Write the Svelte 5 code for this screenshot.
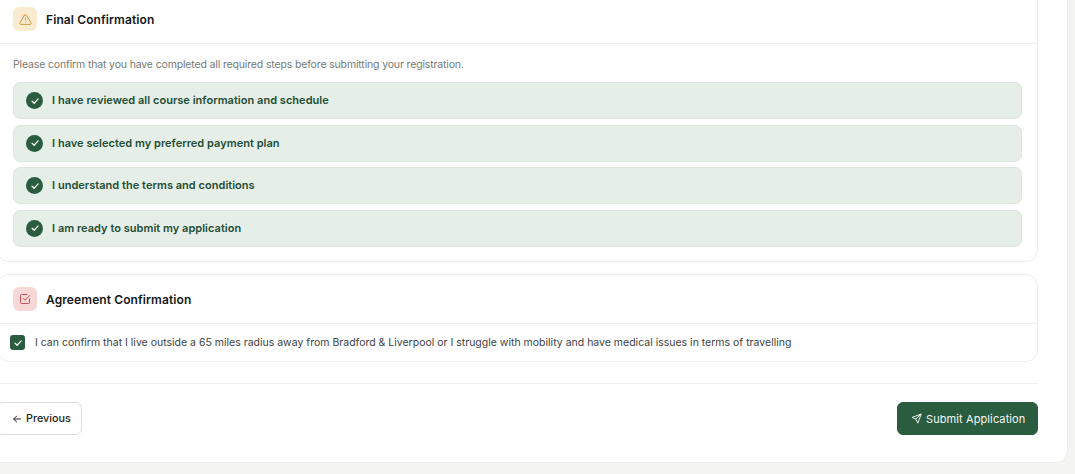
<script>
  let steps = [
    "I have reviewed all course information and schedule",
    "I have selected my preferred payment plan",
    "I understand the terms and conditions",
    "I am ready to submit my application"
  ];
</script>

<div class="page">
  <div class="panel">
    <section class="card first">
      <header class="card-head">
        <span class="head-icon amber">
          <svg viewBox="0 0 24 24" width="13" height="13" fill="none" stroke="#c8963e" stroke-width="1.8" stroke-linecap="round" stroke-linejoin="round">
            <path d="M10.3 3.9 1.8 18a2 2 0 0 0 1.7 3h17a2 2 0 0 0 1.7-3L13.7 3.9a2 2 0 0 0-3.4 0z"/>
            <path d="M12 9v4"/>
            <path d="M12 17h.01"/>
          </svg>
        </span>
        <h2>Final Confirmation</h2>
      </header>
      <div class="card-body">
        <p class="intro">Please confirm that you have completed all required steps before submitting your registration.</p>
        <ul class="steps">
          {#each steps as step}
            <li>
              <span class="tick">
                <svg viewBox="0 0 24 24" width="10" height="10" fill="none" stroke="#fff" stroke-width="3" stroke-linecap="round" stroke-linejoin="round">
                  <path d="M5 12.5l5 5L19.5 7"/>
                </svg>
              </span>
              <span class="step-text">{step}</span>
            </li>
          {/each}
        </ul>
      </div>
    </section>

    <section class="card second">
      <header class="card-head">
        <span class="head-icon red">
          <svg viewBox="0 0 24 24" width="12" height="12" fill="none" stroke="#c9545a" stroke-width="2" stroke-linecap="round" stroke-linejoin="round">
            <path d="M21 11.5V19a2 2 0 0 1-2 2H5a2 2 0 0 1-2-2V5a2 2 0 0 1 2-2h11"/>
            <path d="M8.5 11l3.5 3.5L21.5 5"/>
          </svg>
        </span>
        <h2>Agreement Confirmation</h2>
      </header>
      <label class="agree">
        <span class="box">
          <svg viewBox="0 0 24 24" width="10" height="10" fill="none" stroke="#fff" stroke-width="3" stroke-linecap="round" stroke-linejoin="round">
            <path d="M5 12.5l5 5L19.5 7"/>
          </svg>
        </span>
        I can confirm that I live outside a 65 miles radius away from Bradford &amp; Liverpool or I struggle with mobility and have medical issues in terms of travelling
      </label>
    </section>

    <div class="actions">
      <button class="prev">
        <svg viewBox="0 0 24 24" width="10" height="10" fill="none" stroke="#1f2421" stroke-width="2.4" stroke-linecap="round" stroke-linejoin="round">
          <path d="M20 12H4"/>
          <path d="M11 5l-7 7 7 7"/>
        </svg>
        Previous
      </button>
      <button class="submit">
        <svg viewBox="0 0 24 24" width="11" height="11" fill="none" stroke="#fff" stroke-width="2" stroke-linecap="round" stroke-linejoin="round">
          <path d="M21.5 2.5 2.5 9.5l8 4 4 8z"/>
          <path d="M21.5 2.5 10.5 13.5"/>
        </svg>
        Submit Application
      </button>
    </div>
  </div>
</div>

<style>
  :global(body) {
    margin: 0;
    background: #f4f4f2;
    overflow: hidden;
  }

  .page {
    width: 1075px;
    height: 474px;
    overflow: hidden;
    font-family: Inter, "Liberation Sans", sans-serif;
    color: #1f2421;
  }

  .panel {
    box-sizing: border-box;
    width: 1097px;
    height: 463px;
    margin-left: -29px;
    padding: 0 29px 0 25px;
    background: #fff;
    border: 1px solid #eeeeeb;
    border-top: none;
    border-radius: 0 0 12px 12px;
  }

  .card {
    box-sizing: border-box;
    background: #fff;
    border: 1px solid #eeeeec;
    border-radius: 12px;
  }

  .first {
    border-top: none;
    border-radius: 0 0 12px 12px;
    height: 262px;
  }

  .second {
    margin-top: 12px;
    height: 88px;
  }

  .card-head {
    box-sizing: border-box;
    display: flex;
    align-items: center;
    gap: 9px;
    padding: 0 15px;
    border-bottom: 1px solid #ecedea;
  }

  .first .card-head {
    height: 44px;
    padding-bottom: 5px;
  }

  .second .card-head {
    height: 49px;
  }

  .head-icon {
    display: flex;
    align-items: center;
    justify-content: center;
    width: 24px;
    height: 24px;
    border-radius: 6px;
  }

  .amber { background: #f8ebcf; }
  .red { background: #f6d8d8; }

  h2 {
    margin: 0;
    font-size: 12px;
    font-weight: 600;
    color: #15181a;
    letter-spacing: 0.1px;
  }

  .card-body {
    padding: 14px 15px 0;
  }

  .intro {
    margin: 0 0 10px;
    font-size: 10.5px;
    letter-spacing: -0.15px;
    line-height: 14px;
    color: #757a76;
  }

  .steps {
    list-style: none;
    margin: 0;
    padding: 0;
    display: flex;
    flex-direction: column;
    gap: 5.67px;
  }

  .steps li {
    display: flex;
    align-items: center;
    gap: 9px;
    box-sizing: border-box;
    height: 37px;
    padding: 0 12px;
    background: #e6eee8;
    border: 1px solid #dce6df;
    border-radius: 7px;
    font-size: 11px;
    font-weight: 600;
    color: #234d35;
  }

  .step-text {
    padding-bottom: 1px;
    letter-spacing: 0.03px;
  }

  .tick {
    display: flex;
    align-items: center;
    justify-content: center;
    width: 17px;
    height: 17px;
    border-radius: 50%;
    background: #2a5c3f;
  }

  .agree {
    display: flex;
    align-items: center;
    gap: 10px;
    height: 37px;
    padding: 0 12px;
    font-size: 10.5px;
    color: #3d423f;
  }

  .box {
    display: flex;
    align-items: center;
    justify-content: center;
    width: 15px;
    height: 15px;
    border-radius: 3px;
    background: #2a5c3f;
  }

  .actions {
    display: flex;
    justify-content: space-between;
    margin-top: 21px;
    padding-top: 18px;
    border-top: 1px solid #eeeeec;
  }

  button {
    display: flex;
    align-items: center;
    gap: 4px;
    height: 33px;
    box-sizing: border-box;
    border-radius: 6px;
    font-family: inherit;
    font-size: 10.8px;
    font-weight: 500;
    padding-bottom: 1px;
  }

  .prev {
    background: #fff;
    border: 1px solid #dcdedb;
    color: #1f2421;
    width: 85px;
    padding-left: 14px;
    padding-right: 0;
  }

  .submit {
    background: #2a5c3f;
    border: 1px solid #2a5c3f;
    color: #f4f7f5;
    width: 141px;
    padding-left: 13px;
    padding-right: 0;
    font-size: 11px;
    font-weight: 400;
    letter-spacing: 0.1px;
  }
</style>
